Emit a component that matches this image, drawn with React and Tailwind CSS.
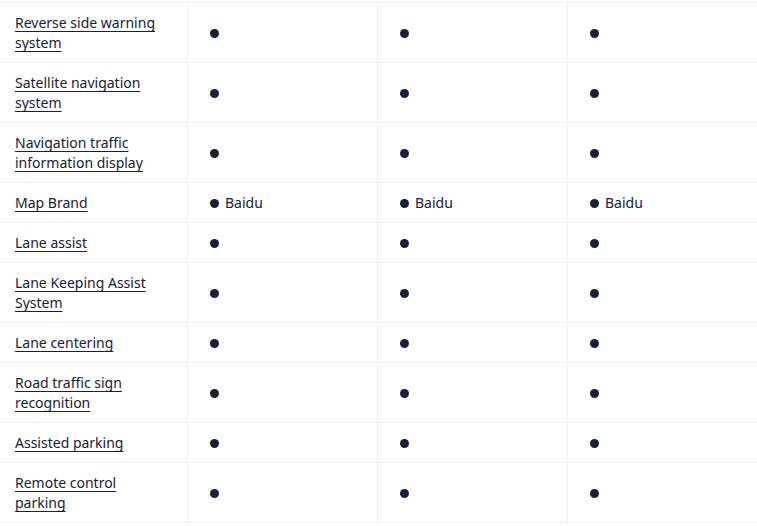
const ROWS = [
  { name: 'Reverse side warning system' },
  { name: 'Satellite navigation system' },
  { name: 'Navigation traffic information display' },
  { name: 'Map Brand', value: 'Baidu' },
  { name: 'Lane assist' },
  { name: 'Lane Keeping Assist System' },
  { name: 'Lane centering' },
  { name: 'Road traffic sign recognition' },
  { name: 'Assisted parking' },
  { name: 'Remote control parking' }
]

function Dot({ value }) {
  return (
    <div className="flex items-center gap-[6px]">
      <span className="inline-block w-[9px] h-[9px] mt-[2px] rounded-full bg-[#16203a]" />
      {value && <span>{value}</span>}
    </div>
  )
}

export default function App() {
  return (
    <div
      className="w-[757px] h-[526px] overflow-hidden bg-white pt-[2px] text-[14px] leading-[20px] text-[#16203a]"
      style={{ fontFamily: '"Noto Sans", sans-serif' }}
    >
      <div className="w-[760px] border-t border-[#eef0f6]">
        {ROWS.map(row => (
          <div key={row.name} className="flex border-b border-[#eef0f6]">
            <div className="w-[188px] shrink-0 flex items-center pt-[10px] pb-[9px] pl-[15px] pr-[20px] border-r border-[#eef0f6]">
              <span className="underline underline-offset-[3px] decoration-1">{row.name}</span>
            </div>
            {[0, 1, 2].map(i => (
              <div key={i} className="w-[190px] shrink-0 flex items-center pl-[22px] border-r border-[#eef0f6]">
                <Dot value={row.value} />
              </div>
            ))}
          </div>
        ))}
      </div>
    </div>
  )
}
